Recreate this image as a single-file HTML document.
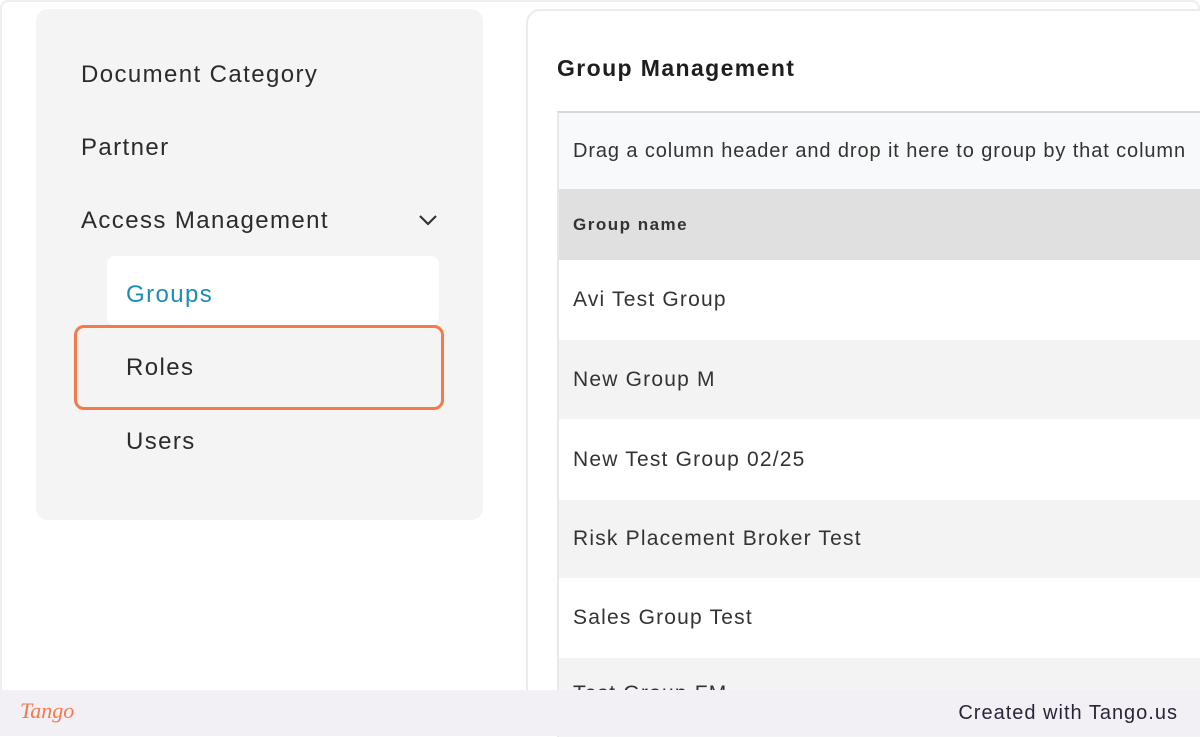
<!DOCTYPE html>
<html><head><meta charset="utf-8"><style>
*{margin:0;padding:0;box-sizing:border-box}
body{width:1200px;height:736px;overflow:hidden;background:#fff;font-family:"Liberation Sans",sans-serif;position:relative;color:#2b2b2b}
.frame{position:absolute;left:0;top:0;width:1200px;height:736px;border:2px solid #eeeef2;border-radius:8px}
.side{position:absolute;left:36px;top:9px;width:447px;height:511px;background:#f4f4f4;border-radius:12px}
.it{position:absolute;font-size:24px;letter-spacing:1.4px;color:#2b2b2b}
.grp{position:absolute;left:107px;top:256px;width:332px;height:69px;background:#fff;border-radius:8px}
.roles{position:absolute;left:74px;top:325px;width:370px;height:85px;border:3px solid #f6794a;border-radius:10px}
.card{position:absolute;left:526px;top:9px;width:700px;height:720px;border:2px solid #ececec;border-radius:14px;background:#fff}
.title{position:absolute;left:557px;top:55px;font-size:23px;font-weight:bold;color:#1e1e1e;letter-spacing:1.4px}
.tbl{position:absolute;left:557px;top:111px;width:660px;border-top:2px solid #d8d8d8;border-left:2px solid #e8e8e8}
.row{height:79px;display:flex;align-items:center;padding-left:14px;font-size:21px;letter-spacing:1.2px;color:#333}
.foot{position:absolute;left:0;top:690px;width:1200px;height:46px;background:#f2f0f5}
</style></head><body>
<div class="frame"></div>
<div class="side"></div>
<div class="it" style="left:81px;top:61px">Document Category</div>
<div class="it" style="left:81px;top:134px">Partner</div>
<div class="it" style="left:81px;top:207px">Access Management</div>
<svg style="position:absolute;left:418px;top:213px" width="20" height="14"><path d="M2 3l8 8 8-8" fill="none" stroke="#333" stroke-width="2.2"/></svg>
<div class="grp"></div>
<div class="it" style="left:126px;top:281px;color:#1a8fb3">Groups</div>
<div class="roles"></div>
<div class="it" style="left:126px;top:354px">Roles</div>
<div class="it" style="left:126px;top:428px">Users</div>
<div class="card"></div>
<div class="title">Group Management</div>
<div class="tbl">
<div class="row" style="height:76px;background:#f8f9fa;font-size:20px;letter-spacing:0.9px">Drag a column header and drop it here to group by that column</div>
<div class="row" style="height:71px;background:#e0e0e0;font-size:17px;font-weight:bold;color:#333;letter-spacing:1.5px">Group name</div>
<div class="row" style="height:80px">Avi Test Group</div>
<div class="row" style="background:#f3f3f3">New Group M</div>
<div class="row" style="height:81px">New Test Group 02/25</div>
<div class="row" style="height:78px;background:#f3f3f3">Risk Placement Broker Test</div>
<div class="row" style="height:80px">Sales Group Test</div>
<div class="row" style="background:#f3f3f3;align-items:flex-start;padding-top:24px">Test Group FM</div>
</div>
<div class="foot"></div>
<div style="position:absolute;left:20px;top:698px;font-family:'Liberation Serif',serif;font-style:italic;font-size:22px;color:#f6794a">Tango</div>
<div style="position:absolute;right:22px;top:702px;font-size:20px;color:#2a2438;letter-spacing:1px">Created with Tango.us</div>
</body></html>
